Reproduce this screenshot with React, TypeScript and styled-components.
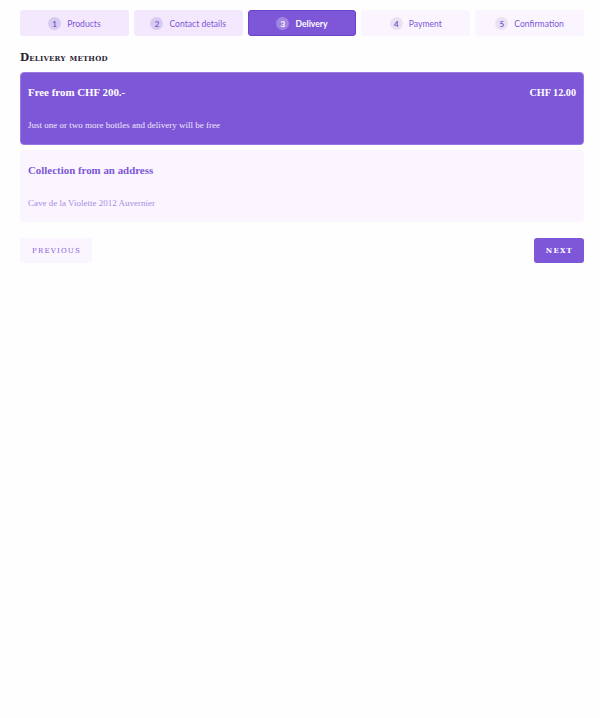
import React from 'react'
import styled, { createGlobalStyle, css } from 'styled-components'

type StepState = 'done' | 'active' | 'todo'

interface Step {
  num: number
  label: string
  state: StepState
}

const steps: Step[] = [
  { num: 1, label: 'Products', state: 'done' },
  { num: 2, label: 'Contact details', state: 'done' },
  { num: 3, label: 'Delivery', state: 'active' },
  { num: 4, label: 'Payment', state: 'todo' },
  { num: 5, label: 'Confirmation', state: 'todo' },
]

const GlobalStyle = createGlobalStyle`
  body {
    margin: 0;
    background: #fefefe;
    font-family: 'Liberation Serif', serif;
  }
`

const Page = styled.main`
  padding: 10px 16px 0 20px;
  display: flex;
  flex-direction: column;
`

const Steps = styled.nav`
  display: grid;
  grid-template-columns: repeat(5, 1fr);
  gap: 5px;
`

const StepTab = styled.div<{ $state: StepState }>`
  height: 26px;
  box-sizing: border-box;
  padding-top: 1px;
  border-radius: 3px;
  display: flex;
  align-items: center;
  justify-content: center;
  gap: 6px;
  font-family: Lato, sans-serif;
  font-size: 8.6px;
  color: #7e57d6;
  border: 1px solid transparent;
  ${({ $state }) =>
    $state === 'done' &&
    css`
      background: #f3e8fd;
    `}
  ${({ $state }) =>
    $state === 'todo' &&
    css`
      background: #faf5fe;
    `}
  ${({ $state }) =>
    $state === 'active' &&
    css`
      background: #7e56d8;
      border-color: #6b43c9;
      color: #fff;
      font-weight: 700;
    `}
`

const Badge = styled.span<{ $state: StepState }>`
  width: 13px;
  height: 13px;
  border-radius: 50%;
  display: inline-flex;
  align-items: center;
  justify-content: center;
  font-size: 8px;
  font-weight: 700;
  background: ${({ $state }) =>
    $state === 'active' ? 'rgba(255,255,255,0.28)' : $state === 'done' ? '#d6ccef' : '#e8e2f2'};
  color: ${({ $state }) => ($state === 'active' ? '#fff' : '#7e57d6')};
`

const Heading = styled.h2`
  margin: 15px 0 9px;
  font-family: 'DejaVu Serif', serif;
  font-variant: small-caps;
  font-size: 10.5px;
  font-weight: 700;
  color: #2a2433;
  letter-spacing: 0.2px;
`

const Option = styled.div<{ $selected?: boolean }>`
  box-sizing: border-box;
  height: ${({ $selected }) => ($selected ? '73px' : '72px')};
  border-radius: 4px;
  padding: 12px 7px 0 7px;
  margin-bottom: 5px;
  display: flex;
  flex-direction: column;
  background: ${({ $selected }) => ($selected ? '#7e56d8' : '#faf5fe')};
  border: 1px solid ${({ $selected }) => ($selected ? '#9a7ae2' : '#faf5fe')};
  color: ${({ $selected }) => ($selected ? '#fff' : '#7e57d6')};
`

const OptionTop = styled.div`
  display: flex;
  justify-content: space-between;
  align-items: center;
  height: 14px;
`

const OptionTitle = styled.span`
  font-size: 10.9px;
  font-weight: 700;
`

const OptionPrice = styled.span`
  font-size: 10.2px;
  font-weight: 700;
`

const OptionNote = styled.p<{ $selected?: boolean }>`
  margin: 21px 0 0;
  font-size: 9px;
  color: ${({ $selected }) => ($selected ? '#efe8fc' : '#a98be6')};
`

const Actions = styled.div`
  display: flex;
  justify-content: space-between;
  margin-top: 11px;
`

const Button = styled.button<{ $primary?: boolean }>`
  height: 25px;
  border: none;
  border-radius: 3px;
  padding: 0 11px 0 12px;
  font-family: 'DejaVu Serif', serif;
  font-size: 7px;
  letter-spacing: 1.2px;
  font-weight: ${({ $primary }) => ($primary ? 700 : 400)};
  background: ${({ $primary }) => ($primary ? '#7e56d8' : '#faf5fe')};
  color: ${({ $primary }) => ($primary ? '#fff' : '#8a63da')};
  cursor: pointer;
`

const App = () => (
  <>
    <GlobalStyle />
    <Page>
      <Steps>
        {steps.map((s) => (
          <StepTab key={s.num} $state={s.state}>
            <Badge $state={s.state}>{s.num}</Badge>
            {s.label}
          </StepTab>
        ))}
      </Steps>
      <Heading>Delivery method</Heading>
      <Option $selected>
        <OptionTop>
          <OptionTitle>Free from CHF 200.-</OptionTitle>
          <OptionPrice>CHF 12.00</OptionPrice>
        </OptionTop>
        <OptionNote $selected>Just one or two more bottles and delivery will be free</OptionNote>
      </Option>
      <Option>
        <OptionTop>
          <OptionTitle>Collection from an address</OptionTitle>
        </OptionTop>
        <OptionNote>Cave de la Violette 2012 Auvernier</OptionNote>
      </Option>
      <Actions>
        <Button>PREVIOUS</Button>
        <Button $primary>NEXT</Button>
      </Actions>
    </Page>
  </>
)

export default App
